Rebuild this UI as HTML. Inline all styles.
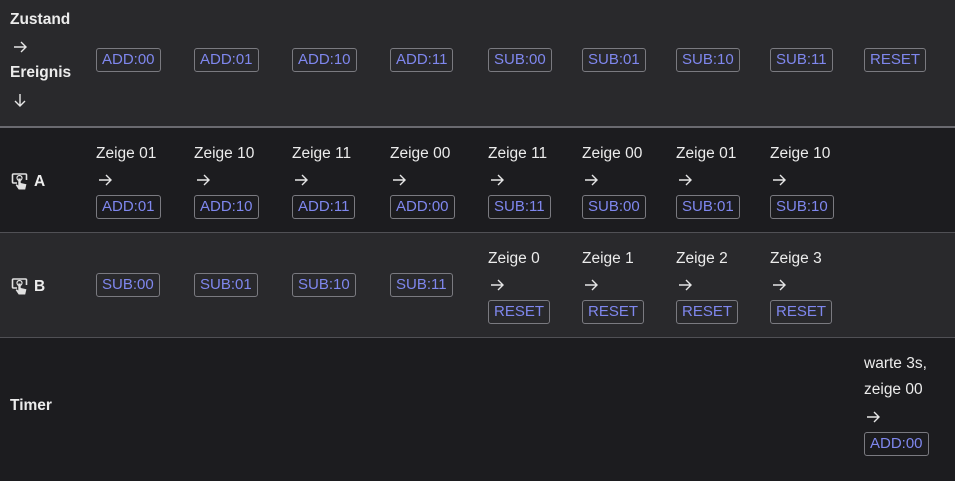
<!DOCTYPE html>
<html><head><style>
body{margin:0;width:955px;height:481px;overflow:hidden;background:#1c1c1f;font-family:"Liberation Sans",sans-serif;color:#eee;position:relative}
.r{position:absolute;left:0;width:955px}
.t{position:absolute;font-size:15.5px;line-height:18px;white-space:nowrap;color:#ececec}
.b{font-weight:bold}
.k{position:absolute;height:22px;line-height:22px;font-size:15px;color:#7f87ee;border:1px solid #7a7a80;border-radius:3px;padding:0 5px;white-space:nowrap}
.ic{position:absolute;width:18px;height:18px}
.ar{position:absolute;width:14px;height:12px}
</style></head><body>
<svg width="0" height="0" style="position:absolute"><defs>
<symbol id="a" viewBox="0 0 14 12"><path d="M1 6h12M8 1l5 5-5 5" fill="none" stroke="#e6e6e6" stroke-width="1.4"/></symbol>
<symbol id="d" viewBox="0 0 12 14"><path d="M6 1v12M1 8l5 5 5-5" fill="none" stroke="#e6e6e6" stroke-width="1.4"/></symbol>
<symbol id="h" viewBox="0 0 18 18"><path d="M6 11H2.5Q1.5 11 1.5 10V3Q1.5 2 2.5 2h12q1 0 1 1v5" fill="none" stroke="#e0e0e0" stroke-width="1.6"/><circle cx="8.5" cy="6" r="2.5" fill="none" stroke="#e0e0e0" stroke-width="1.2"/><path d="M7.3 6.5v7l-1.6-1.2-1 .8 3 4.4h6.5l1.2-5.2-5.7-1.3V6.5z" fill="#e0e0e0"/></symbol>
</defs></svg>
<div class="r" style="top:0;height:126px;background:#29292c"></div>
<div class="r" style="top:126px;height:2px;background:#6a6a70"></div>
<div class="r" style="top:128px;height:104px;background:#1c1c1f"></div>
<div class="r" style="top:232px;height:1px;background:#505055"></div>
<div class="r" style="top:233px;height:104px;background:#29292c"></div>
<div class="r" style="top:337px;height:1px;background:#505055"></div>

<div class="t b" style="left:10px;top:11px">Zustand</div>
<svg class="ar" style="left:13px;top:41px"><use href="#a"/></svg>
<div class="t b" style="left:10px;top:64px">Ereignis</div>
<svg style="position:absolute;left:14px;top:93px;width:12px;height:14px"><use href="#d"/></svg>

<div class="k" style="left:96px;top:48px">ADD:00</div>
<div class="k" style="left:194px;top:48px">ADD:01</div>
<div class="k" style="left:292px;top:48px">ADD:10</div>
<div class="k" style="left:390px;top:48px">ADD:11</div>
<div class="k" style="left:488px;top:48px">SUB:00</div>
<div class="k" style="left:582px;top:48px">SUB:01</div>
<div class="k" style="left:676px;top:48px">SUB:10</div>
<div class="k" style="left:770px;top:48px">SUB:11</div>
<div class="k" style="left:864px;top:48px">RESET</div>

<svg class="ic" style="left:11px;top:172px"><use href="#h"/></svg>
<div class="t b" style="left:34px;top:173px">A</div>
<svg class="ic" style="left:11px;top:277px"><use href="#h"/></svg>
<div class="t b" style="left:34px;top:278px">B</div>
<div class="t b" style="left:10px;top:397px">Timer</div>

<div class="t" style="left:96px;top:145px">Zeige 01</div><svg class="ar" style="left:98px;top:174px"><use href="#a"/></svg><div class="k" style="left:96px;top:195px">ADD:01</div>
<div class="t" style="left:194px;top:145px">Zeige 10</div><svg class="ar" style="left:196px;top:174px"><use href="#a"/></svg><div class="k" style="left:194px;top:195px">ADD:10</div>
<div class="t" style="left:292px;top:145px">Zeige 11</div><svg class="ar" style="left:294px;top:174px"><use href="#a"/></svg><div class="k" style="left:292px;top:195px">ADD:11</div>
<div class="t" style="left:390px;top:145px">Zeige 00</div><svg class="ar" style="left:392px;top:174px"><use href="#a"/></svg><div class="k" style="left:390px;top:195px">ADD:00</div>
<div class="t" style="left:488px;top:145px">Zeige 11</div><svg class="ar" style="left:490px;top:174px"><use href="#a"/></svg><div class="k" style="left:488px;top:195px">SUB:11</div>
<div class="t" style="left:582px;top:145px">Zeige 00</div><svg class="ar" style="left:584px;top:174px"><use href="#a"/></svg><div class="k" style="left:582px;top:195px">SUB:00</div>
<div class="t" style="left:676px;top:145px">Zeige 01</div><svg class="ar" style="left:678px;top:174px"><use href="#a"/></svg><div class="k" style="left:676px;top:195px">SUB:01</div>
<div class="t" style="left:770px;top:145px">Zeige 10</div><svg class="ar" style="left:772px;top:174px"><use href="#a"/></svg><div class="k" style="left:770px;top:195px">SUB:10</div>

<div class="k" style="left:96px;top:273px">SUB:00</div>
<div class="k" style="left:194px;top:273px">SUB:01</div>
<div class="k" style="left:292px;top:273px">SUB:10</div>
<div class="k" style="left:390px;top:273px">SUB:11</div>
<div class="t" style="left:488px;top:250px">Zeige 0</div><svg class="ar" style="left:490px;top:279px"><use href="#a"/></svg><div class="k" style="left:488px;top:300px">RESET</div>
<div class="t" style="left:582px;top:250px">Zeige 1</div><svg class="ar" style="left:584px;top:279px"><use href="#a"/></svg><div class="k" style="left:582px;top:300px">RESET</div>
<div class="t" style="left:676px;top:250px">Zeige 2</div><svg class="ar" style="left:678px;top:279px"><use href="#a"/></svg><div class="k" style="left:676px;top:300px">RESET</div>
<div class="t" style="left:770px;top:250px">Zeige 3</div><svg class="ar" style="left:772px;top:279px"><use href="#a"/></svg><div class="k" style="left:770px;top:300px">RESET</div>

<div class="t" style="left:864px;top:355px">warte 3s,</div>
<div class="t" style="left:864px;top:381px">zeige 00</div>
<svg class="ar" style="left:866px;top:411px"><use href="#a"/></svg>
<div class="k" style="left:864px;top:432px">ADD:00</div>
</body></html>
